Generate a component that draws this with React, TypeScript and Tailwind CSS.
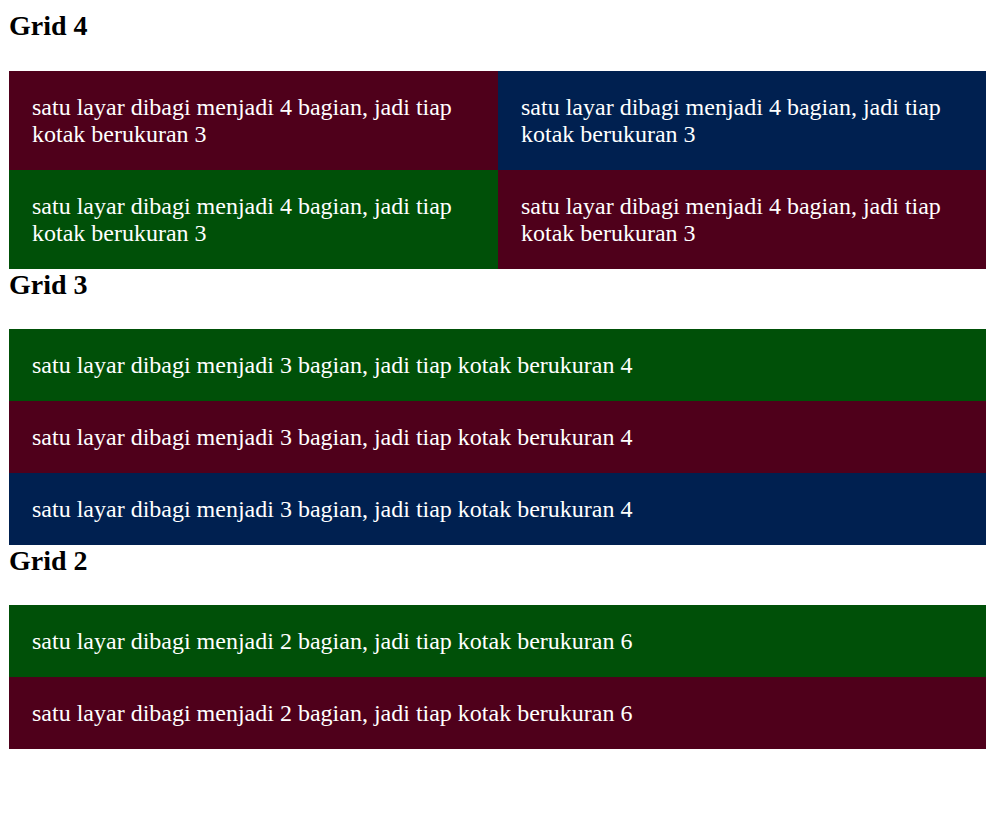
import React from "react";

const maroon = "bg-[#4f001b]";
const navy = "bg-[#002050]";
const green = "bg-[#005008]";

function Box({ color, children }: { color: string; children: React.ReactNode }) {
  return (
    <div className={`${color} text-white text-[24px] leading-[27px] pt-[23px] pb-[22px] pl-[23px] pr-[22px]`}>
      {children}
    </div>
  );
}

function Heading({ children, first }: { children: React.ReactNode; first?: boolean }) {
  return (
    <h2 className={`text-[28px] font-bold leading-[32px] text-black ${first ? "mb-[29px]" : "mb-[28px]"}`}>
      {children}
    </h2>
  );
}

export default function App() {
  const t4 = "satu layar dibagi menjadi 4 bagian, jadi tiap kotak berukuran 3";
  const t3 = "satu layar dibagi menjadi 3 bagian, jadi tiap kotak berukuran 4";
  const t2 = "satu layar dibagi menjadi 2 bagian, jadi tiap kotak berukuran 6";
  return (
    <div
      className="min-h-[839px] bg-white pt-[10px] pl-[9px]"
      style={{ fontFamily: '"Liberation Serif", "Times New Roman", serif' }}
    >
      <div className="w-[977px]">
        <Heading first>Grid 4</Heading>
        <div className="grid grid-cols-[489px_488px]">
          <Box color={maroon}>{t4}</Box>
          <Box color={navy}>{t4}</Box>
          <Box color={green}>{t4}</Box>
          <Box color={maroon}>{t4}</Box>
        </div>
        <Heading>Grid 3</Heading>
        <div className="flex flex-col">
          <Box color={green}>{t3}</Box>
          <Box color={maroon}>{t3}</Box>
          <Box color={navy}>{t3}</Box>
        </div>
        <Heading>Grid 2</Heading>
        <div className="flex flex-col">
          <Box color={green}>{t2}</Box>
          <Box color={maroon}>{t2}</Box>
        </div>
      </div>
    </div>
  );
}
